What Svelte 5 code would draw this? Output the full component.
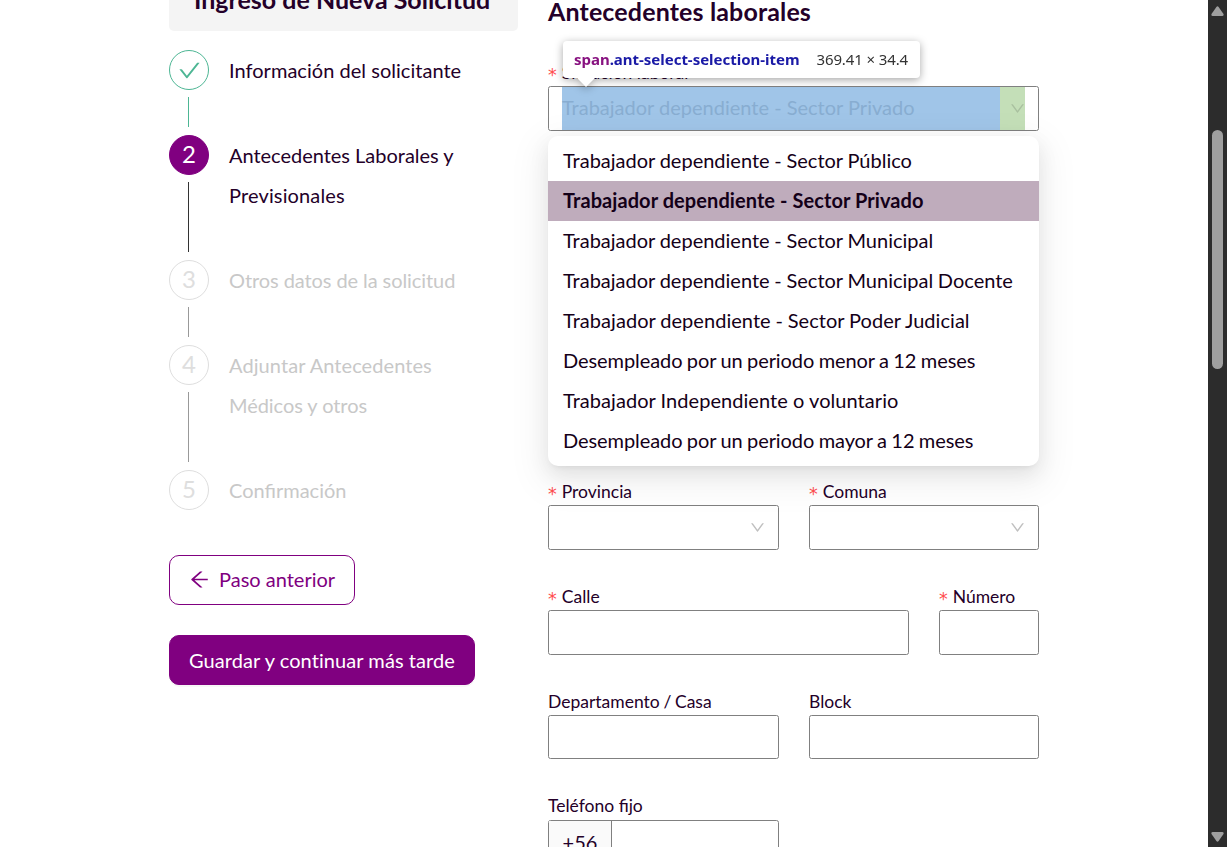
<script>
  const steps = [
    { lines: [{ text: 'Información del solicitante', track: 0.03 }], state: 'done' },
    { lines: [{ text: 'Antecedentes Laborales y', track: -0.02 }, { text: 'Previsionales', track: 0.14 }], state: 'active' },
    { lines: [{ text: 'Otros datos de la solicitud', track: -0.08 }], state: 'wait' },
    { lines: [{ text: 'Adjuntar Antecedentes', track: 0.08 }, { text: 'Médicos y otros', track: -0.06 }], state: 'wait' },
    { lines: [{ text: 'Confirmación', track: 0 }], state: 'wait' }
  ];

  const options = [
    { text: 'Trabajador dependiente - Sector Público', track: 0, gap: -0.4 },
    { text: 'Trabajador dependiente - Sector Privado', track: 0.07, gap: 0 },
    { text: 'Trabajador dependiente - Sector Municipal', track: 0, gap: -0.4 },
    { text: 'Trabajador dependiente - Sector Municipal Docente', track: 0, gap: -0.4 },
    { text: 'Trabajador dependiente - Sector Poder Judicial', track: 0.05, gap: -0.4 },
    { text: 'Desempleado por un periodo menor a 12 meses', track: -0.08, gap: -0.6 },
    { text: 'Trabajador Independiente o voluntario', track: 0.05, gap: 0 },
    { text: 'Desempleado por un periodo mayor a 12 meses', track: -0.08, gap: -0.6 }
  ];
  const selected = 1;
</script>

{#snippet chevron()}
  <svg class="chevron" viewBox="0 0 1024 1024" aria-hidden="true"><path d="M884 256h-75c-5.1 0-9.9 2.5-12.9 6.6L512 654.2 227.9 262.6c-3-4.1-7.8-6.6-12.9-6.6h-75c-6.5 0-10.3 7.4-6.5 12.7l352.6 486.1c12.8 17.6 39 17.6 51.7 0l352.6-486.1c3.9-5.3.1-12.7-6.4-12.7z" /></svg>
{/snippet}

{#snippet label(text, required)}
  <div class="label">
    {#if required}<span class="star">*</span>{/if}<span>{text}</span>
  </div>
{/snippet}

<div class="viewport">
  <div class="page">
    <aside>
      <h1>Ingreso de Nueva Solicitud</h1>
      <ol class="steps">
        {#each steps as step, i}
          <li class={step.state}>
            <div class="rail">
              <div class="circle">
                {#if step.state === 'done'}
                  <svg viewBox="0 0 1024 1024" width="25" height="25"><path d="M912 190h-69.9c-9.8 0-19.1 4.5-25.1 12.2L404.7 724.5 207 474a32 32 0 00-25.1-12.2H112c-6.7 0-10.4 7.7-6.3 12.9l273.9 347c12.8 16.2 37.4 16.2 50.3 0l488.4-618.9c4.1-5.1.4-12.8-6.3-12.8z" fill="currentColor" /></svg>
                {:else}{i + 1}{/if}
              </div>
              {#if i < steps.length - 1}<div class="tail"></div>{/if}
            </div>
            <div class="title">
              {#each step.lines as line}<div style="letter-spacing: {line.track}px">{line.text}</div>{/each}
            </div>
          </li>
        {/each}
      </ol>
      <button class="back">
        <svg viewBox="0 0 1024 1024" width="23" height="23"><path d="M872 474H286.9l350.2-304c5.6-4.9 2.2-14-5.2-14h-88.5c-3.9 0-7.6 1.4-10.5 3.9L155 487.8a31.96 31.96 0 000 48.3L535.1 866c1.5 1.3 3.3 2 5.2 2h91.5c7.4 0 10.8-9.2 5.2-14L286.9 550H872c4.4 0 8-3.6 8-8v-60c0-4.4-3.6-8-8-8z" fill="currentColor" /></svg>
        <span>Paso anterior</span>
      </button>
      <button class="save">Guardar y continuar más tarde</button>
    </aside>

    <main>
      <h2>Antecedentes laborales</h2>
      <div class="field situation">
        {@render label('Situación laboral', true)}
        <div class="box select inspected">
          <span class="value">Trabajador dependiente - Sector Privado</span>
          {@render chevron()}
        </div>
        <div class="dropdown">
          {#each options as option, i}
            <div class="option" class:selected={i === selected} style="letter-spacing: {option.track}px; word-spacing: {option.gap}px">{option.text}</div>
          {/each}
        </div>
        <div class="tooltip">
          <span class="selector"><b>span</b>.ant-select-selection-item</span>
          <span class="size">369.41 × 34.4</span>
        </div>
      </div>

      <div class="row halves">
        <div class="field">{@render label('Provincia', true)}<div class="box select">{@render chevron()}</div></div>
        <div class="field">{@render label('Comuna', true)}<div class="box select">{@render chevron()}</div></div>
      </div>
      <div class="row street">
        <div class="field">{@render label('Calle', true)}<div class="box"></div></div>
        <div class="field">{@render label('Número', true)}<div class="box"></div></div>
      </div>
      <div class="row halves optional">
        <div class="field">{@render label('Departamento / Casa', false)}<div class="box short"></div></div>
        <div class="field">{@render label('Block', false)}<div class="box short"></div></div>
      </div>
      <div class="row halves contact">
        <div class="field">
          {@render label('Teléfono fijo', false)}
          <div class="box phone"><span>+56</span></div>
        </div>
      </div>
    </main>
  </div>

  <div class="scrollbar">
    <svg width="13" height="10" viewBox="0 0 13 10"><path d="M5.4 .9Q6.5-.5 7.6.9L12.5 8Q13 10 11.3 10H1.7Q0 10 .5 8Z" fill="#9f9f9f" /></svg>
    <div class="thumb"></div>
    <svg class="down" width="13" height="10" viewBox="0 0 13 10"><path d="M5.4 9.1Q6.5 10.5 7.6 9.1L12.5 2Q13 0 11.3 0H1.7Q0 0 .5 2Z" fill="#9f9f9f" /></svg>
  </div>
</div>

<style>
  :global(body) { margin: 0; background: #fff; }
  .viewport {
    display: flex;
    justify-content: space-between;
    height: 847px;
    overflow: hidden;
    font-family: Lato, sans-serif;
    font-size: 20px;
    color: #240029;
  }
  .viewport :global(*) { box-sizing: border-box; }
  .page {
    display: grid;
    grid-template-columns: 349px 491px;
    column-gap: 30px;
    padding-left: 169px;
  }
  h1, h2, ol { margin: 0; padding: 0; font-weight: 700; }
  h1 {
    height: 61px;
    margin-top: -30px;
    border-radius: 5px;
    background: #f4f4f4;
    font-size: 25px;
    line-height: 59px;
    padding-left: 25px;
    white-space: nowrap;
  }
  .steps { list-style: none; margin-top: 19px; font-weight: 400; }
  li { display: flex; gap: 20px; }
  .rail {
    display: flex;
    flex-direction: column;
    width: 40px;
  }
  .circle {
    display: flex;
    align-items: center;
    justify-content: center;
    width: 40px;
    height: 40px;
    padding-bottom: 2px;
    border: 1px solid #dedede;
    border-radius: 50%;
    font-size: 24px;
    line-height: 36px;
    color: #dedede;
  }
  .tail {
    flex: 1;
    width: 1px;
    margin: 7px 0 8px 19px;
    background: #999;
  }
  .title { line-height: 40px; padding-bottom: 45px; white-space: nowrap; }
  li:last-child .title { padding-bottom: 0; }
  .wait .title { color: #c8c8c8; }
  .done .circle { padding-bottom: 0; color: #4db694; border-color: #4db694; }
  .done .tail { background: #4db694; }
  .active .circle { color: #fff; background: purple; border-color: purple; }
  .active .tail { background: #333; }
  button {
    display: flex;
    align-items: center;
    height: 50px;
    border: 1px solid purple;
    border-radius: 10px;
    font: 20px Lato, sans-serif;
    white-space: nowrap;
  }
  .back {
    width: 186px;
    margin-top: 45px;
    padding: 0 0 2px 18px;
    gap: 8px;
    color: purple;
    background: #fff;
  }
  .save {
    width: 306px;
    margin-top: 30px;
    justify-content: center;
    padding: 0;
    letter-spacing: .07px;
    color: #fff;
    background: purple;
    box-shadow: 0 2px 0 rgba(0, 0, 0, .03);
  }
  h2 {
    height: 59px;
    font-size: 25px;
    line-height: 22px;
    letter-spacing: .14px;
    white-space: nowrap;
  }
  .field { position: relative; }
  .label {
    display: flex;
    gap: 5px;
    height: 27px;
    font-size: 17.5px;
    line-height: 27px;
    white-space: nowrap;
  }
  .star {
    width: 8.75px;
    padding-top: 3px;
    font-family: "DejaVu Sans", sans-serif;
    color: #ff4d4f;
  }
  .box {
    height: 45px;
    border: 1px solid #808080;
    border-radius: 2.5px;
  }
  .short { height: 44px; }
  .select {
    display: flex;
    align-items: center;
    justify-content: flex-end;
    padding: 0 12px 0 13px;
  }
  .chevron {
    width: 17px;
    height: 17px;
    fill: #bfbfbf;
  }
  .situation { margin-bottom: 347px; }
  .inspected {
    justify-content: space-between;
    background: linear-gradient(90deg, transparent 13px, #a0c5e8 13px 451px, #c4dfb8 451px 476px, transparent 476px);
  }
  .inspected .value { padding-bottom: 3px; color: #88add1; }
  .inspected .chevron { fill: #a9c09f; }
  .dropdown {
    position: absolute;
    z-index: 2;
    top: 77px;
    left: 0;
    width: 491px;
    padding: 5px 0;
    border-radius: 10px;
    background: #fff;
    color: #140018;
    box-shadow: 0 7.5px 20px rgba(0, 0, 0, .08), 0 3.75px 7.5px -5px rgba(0, 0, 0, .12), 0 11.25px 35px 10px rgba(0, 0, 0, .05);
  }
  .option {
    height: 40px;
    padding-left: 15px;
    line-height: 38px;
    white-space: nowrap;
  }
  .selected { background: #bfacbc; font-weight: 700; }
  .tooltip {
    position: absolute;
    z-index: 3;
    top: -18px;
    left: 15px;
    display: flex;
    align-items: center;
    justify-content: space-between;
    width: 357px;
    height: 37px;
    padding: 0 12px 1px 11px;
    border-radius: 4px;
    background: #fff;
    font-family: "Noto Sans", sans-serif;
    font-size: 15px;
    white-space: nowrap;
    filter: drop-shadow(0 2px 4px rgba(0, 0, 0, .35));
  }
  .tooltip::after {
    content: '';
    position: absolute;
    top: 37px;
    left: 14px;
    border: 9px solid transparent;
    border-top-color: #fff;
    border-bottom: 0;
  }
  .selector { color: #1a1aa6; font-weight: 700; letter-spacing: -.02px; }
  .selector b { color: #881280; font-weight: 700; }
  .size { color: #333; letter-spacing: -.12px; }
  .row { display: grid; column-gap: 30px; height: 105px; }
  .halves { grid-template-columns: 231px 230px; }
  .street { grid-template-columns: 361px 100px; }
  .optional .label { word-spacing: -.8px; }
  .contact .label { line-height: 25px; }
  .phone { display: flex; }
  .phone span {
    width: 63px;
    border-right: 1px solid #808080;
    background: #fafafa;
    line-height: 43px;
    text-align: center;
  }
  .scrollbar {
    display: flex;
    flex-direction: column;
    align-items: center;
    width: 19px;
    padding: 6px 0 5px;
    background: #2c2c2c;
  }
  .thumb {
    width: 11px;
    height: 239px;
    margin-top: 114px;
    border-radius: 6px;
    background: #9f9f9f;
  }
  .down { margin-top: auto; }
</style>
